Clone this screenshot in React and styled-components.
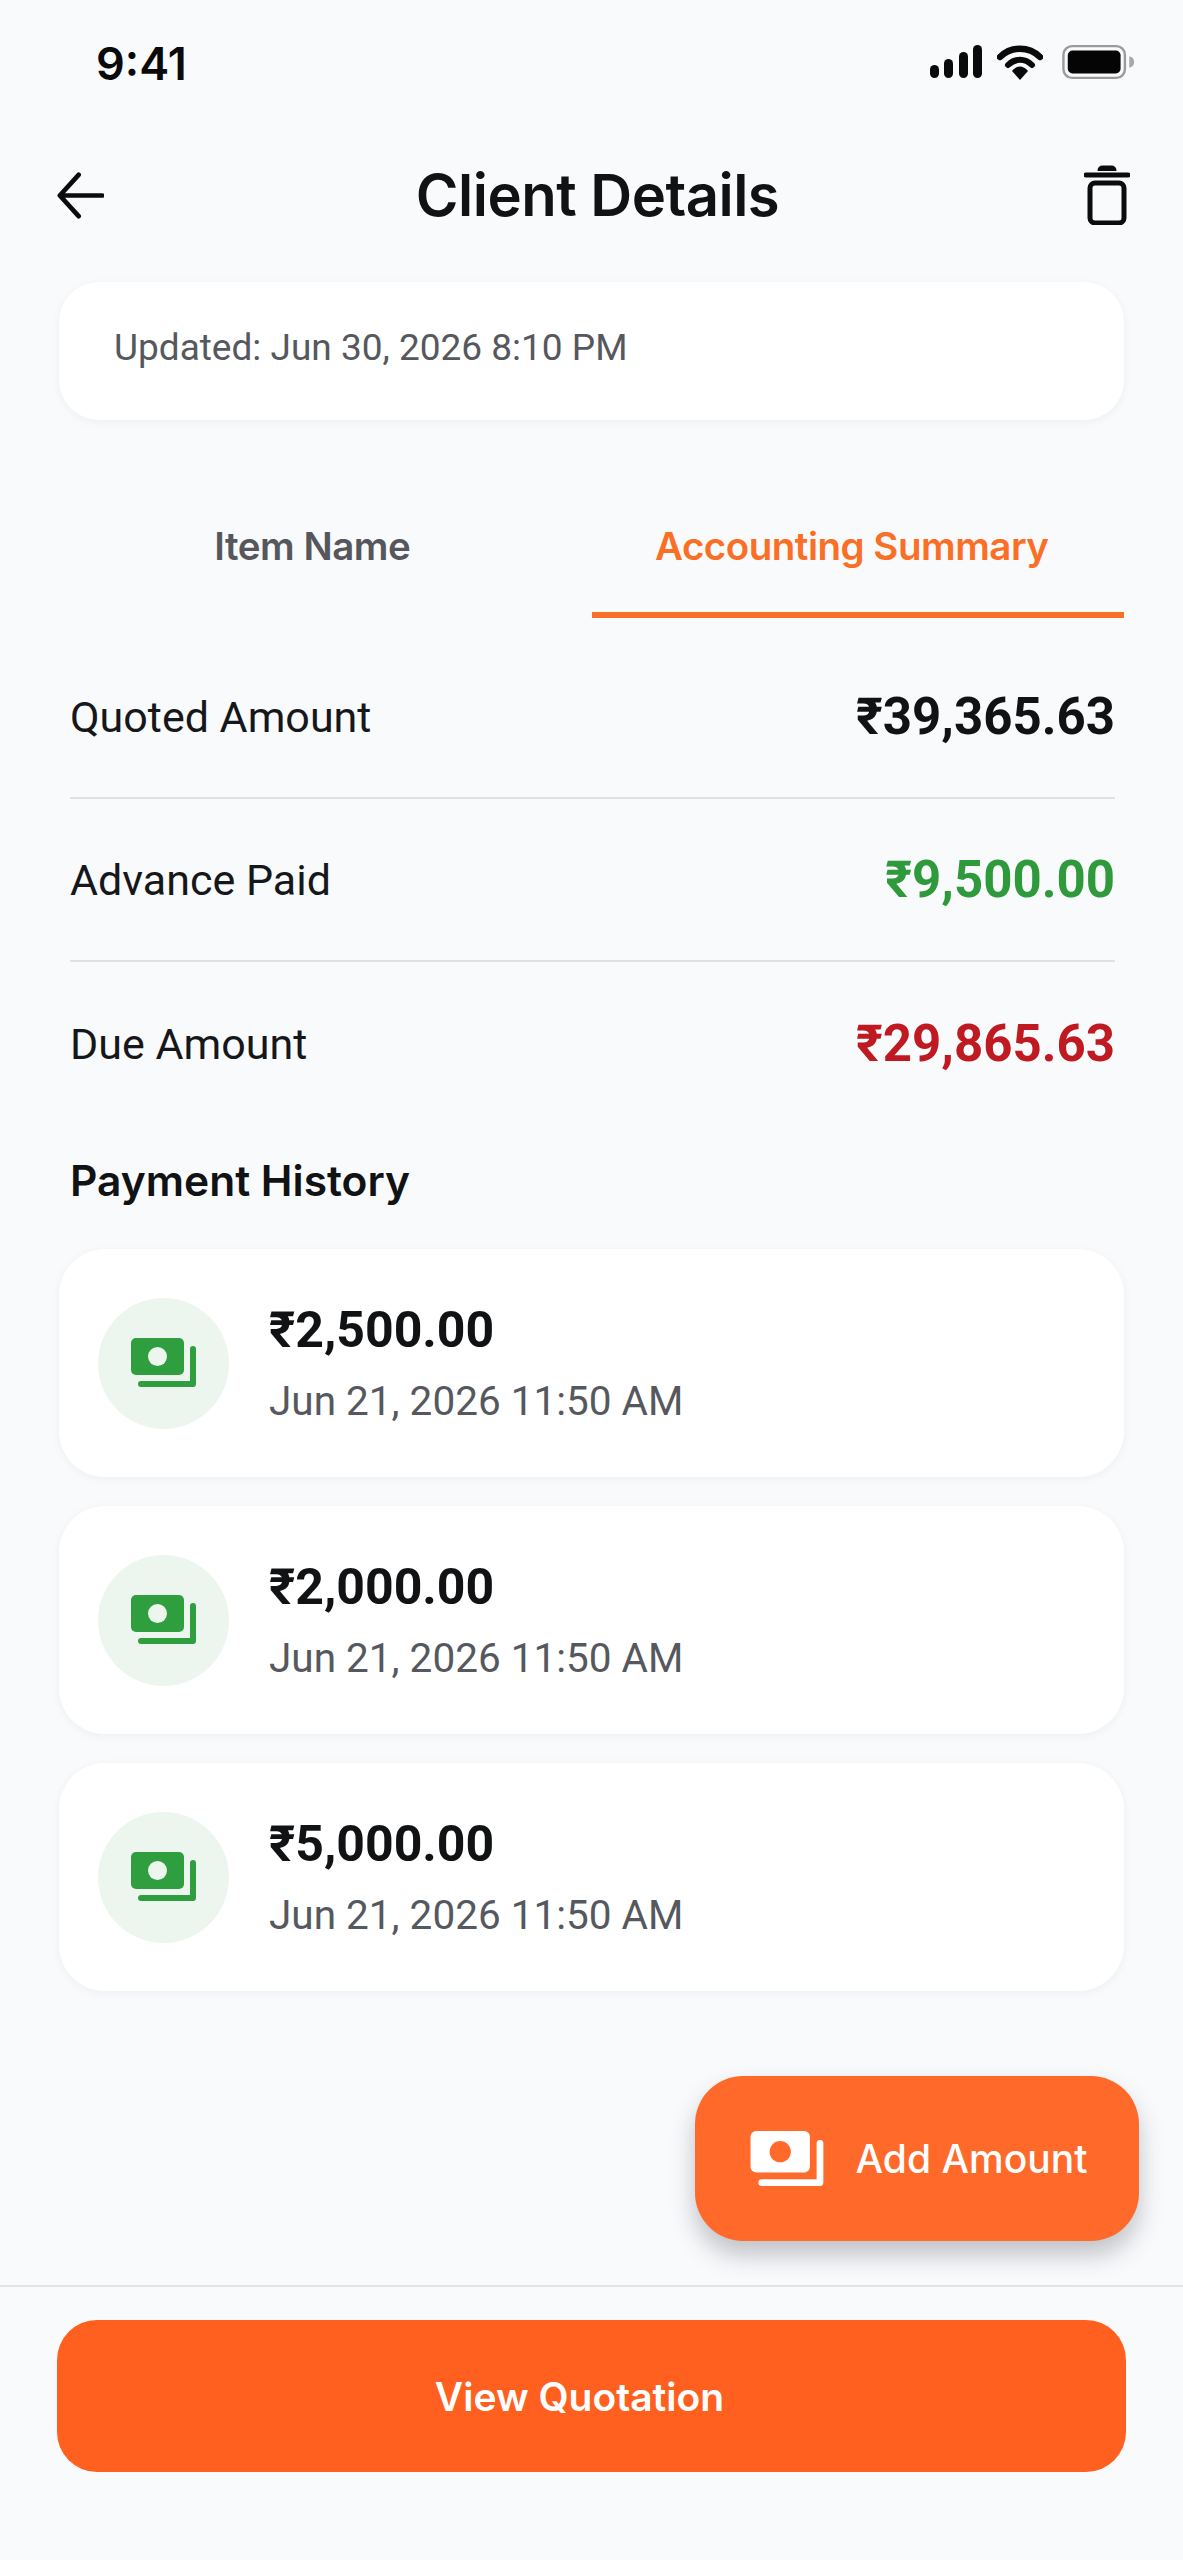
import React from 'react';
import styled, { createGlobalStyle } from 'styled-components';

const GlobalStyle = createGlobalStyle`
  html, body {
    margin: 0;
    padding: 0;
    background: #f9fafc;
  }
  * {
    box-sizing: border-box;
  }
`;

const payments = [
  { id: 1, amount: '₹2,500.00', date: 'Jun 21, 2026 11:50 AM' },
  { id: 2, amount: '₹2,000.00', date: 'Jun 21, 2026 11:50 AM' },
  { id: 3, amount: '₹5,000.00', date: 'Jun 21, 2026 11:50 AM' },
];

function CashIcon({ color, hole, width, height }) {
  return (
    <svg width={width} height={height} viewBox="0 0 66 50">
      <rect x="0" y="0" width="53" height="37" rx="5" fill={color} />
      <circle cx="26.5" cy="18.5" r="9.5" fill={hole} />
      <path d="M62 11 V46 H10" fill="none" stroke={color} strokeWidth="6" strokeLinecap="round" strokeLinejoin="round" />
    </svg>
  );
}

export default function App() {
  return (
    <Page>
      <GlobalStyle />
      <StatusBar>
        <Clock>9:41</Clock>
        <StatusIcons>
          <svg width="53" height="34" viewBox="0 0 53 34">
            <rect x="0" y="20" width="9" height="13" rx="4.5" fill="#0a0a0a" />
            <rect x="14" y="14" width="9" height="19" rx="4.5" fill="#0a0a0a" />
            <rect x="29" y="7" width="9" height="26" rx="4.5" fill="#0a0a0a" />
            <rect x="43" y="0" width="9" height="33" rx="4.5" fill="#0a0a0a" />
          </svg>
          <svg width="46" height="35" viewBox="0 0 46 35">
            <path d="M3 12 C14 1 32 1 43 12" fill="none" stroke="#0a0a0a" strokeWidth="6.5" strokeLinecap="round" />
            <path d="M11 20 C18 13 28 13 35 20" fill="none" stroke="#0a0a0a" strokeWidth="6" strokeLinecap="round" />
            <path d="M15 26 C20 20 26 20 31 26 L23 35 Z" fill="#0a0a0a" />
          </svg>
          <BatteryIcon width="73" height="36" viewBox="0 0 76 36">
            <rect x="1.5" y="1.5" width="64" height="33" rx="9" fill="none" stroke="#9a9a9a" strokeWidth="2.5" />
            <rect x="6" y="6" width="55" height="24" rx="5" fill="#050505" />
            <path d="M70 12 C74 13 75 15 75 18 C75 21 74 23 70 24 Z" fill="#a8a8a8" />
          </BatteryIcon>
        </StatusIcons>
      </StatusBar>

      <Header>
        <IconButton>
          <svg width="47" height="47" viewBox="0 0 50 50">
            <path d="M23 3 L3 25 L23 47 M4 25 H48" fill="none" stroke="#0c0c0c" strokeWidth="5" strokeLinecap="round" strokeLinejoin="round" />
          </svg>
        </IconButton>
        <Title>Client Details</Title>
        <IconButton>
          <svg width="46" height="60" viewBox="0 0 46 60">
            <path d="M2 10 H44" fill="none" stroke="#0c0c0c" strokeWidth="5" strokeLinecap="round" />
            <path d="M15 6 Q15 2 19 2 H27 Q31 2 31 6" fill="#0c0c0c" stroke="#0c0c0c" strokeWidth="3" />
            <rect x="6" y="18" width="34" height="40" rx="5" fill="none" stroke="#0c0c0c" strokeWidth="5" />
          </svg>
        </IconButton>
      </Header>

      <Content>
        <UpdatedCard>Updated: Jun 30, 2026 8:10 PM</UpdatedCard>

        <Tabs>
          <Tab>Item Name</Tab>
          <Tab $active>Accounting Summary</Tab>
        </Tabs>

        <Summary>
          <SummaryRow>
            <RowLabel>Quoted Amount</RowLabel>
            <RowValue $color="#111214">₹39,365.63</RowValue>
          </SummaryRow>
          <SummaryRow>
            <RowLabel>Advance Paid</RowLabel>
            <RowValue $color="#2e9a3c">₹9,500.00</RowValue>
          </SummaryRow>
          <SummaryRow>
            <RowLabel>Due Amount</RowLabel>
            <RowValue $color="#bf1a22">₹29,865.63</RowValue>
          </SummaryRow>
        </Summary>

        <SectionTitle>Payment History</SectionTitle>

        <PaymentList>
          {payments.map((p) => (
            <PaymentCard key={p.id}>
              <IconCircle>
                <CashIcon color="#2f9e3f" hole="#ecf6ee" width="66" height="50" />
              </IconCircle>
              <PaymentText>
                <PaymentAmount>{p.amount}</PaymentAmount>
                <PaymentDate>{p.date}</PaymentDate>
              </PaymentText>
            </PaymentCard>
          ))}
        </PaymentList>

        <AddButton>
          <CashIcon color="#ffffff" hole="#ff6a2b" width="75" height="56" />
          Add Amount
        </AddButton>
      </Content>

      <Footer>
        <QuotationButton>View Quotation</QuotationButton>
      </Footer>
    </Page>
  );
}

const Page = styled.div`
  width: 1183px;
  height: 2560px;
  display: flex;
  flex-direction: column;
  background: #f9fafc;
  font-family: 'Roboto', 'Inter', sans-serif;
  overflow: hidden;
`;

const StatusBar = styled.div`
  height: 128px;
  padding: 40px 48px 0 96px;
  display: flex;
  justify-content: space-between;
  align-items: flex-start;
`;

const Clock = styled.div`
  font-family: 'Inter', sans-serif;
  font-weight: 600;
  font-size: 45px;
  line-height: 48px;
  color: #0a0a0a;
`;

const StatusIcons = styled.div`
  display: flex;
  align-items: center;
  gap: 14px;
  margin-top: 4px;
`;

const BatteryIcon = styled.svg`
  margin-left: 5px;
`;

const Header = styled.header`
  height: 134px;
  padding: 0 51px 0 55px;
  display: flex;
  justify-content: space-between;
  align-items: center;
`;

const IconButton = styled.div`
  width: 50px;
  display: flex;
  justify-content: center;
`;

const Title = styled.h1`
  margin: 0 0 0 8px;
  font-family: 'Inter', sans-serif;
  font-weight: 600;
  font-size: 58px;
  letter-spacing: -0.5px;
  color: #111214;
`;

const Content = styled.main`
  flex: 1;
  padding: 20px 59px 0;
  display: flex;
  flex-direction: column;
`;

const UpdatedCard = styled.div`
  height: 138px;
  padding: 0 55px 8px;
  display: flex;
  align-items: center;
  background: #fff;
  border-radius: 40px;
  box-shadow: 0 2px 10px rgba(30, 40, 70, 0.05);
  font-size: 37px;
  color: #55585e;
`;

const Tabs = styled.div`
  margin-top: 94px;
  display: flex;
`;

const Tab = styled.div`
  width: 50%;
  height: 104px;
  padding: 0 ${(props) => (props.$active ? '12px' : '26px')} 35px 0;
  display: flex;
  justify-content: center;
  align-items: center;
  font-family: 'Inter', sans-serif;
  font-weight: 600;
  font-size: 38.5px;
  letter-spacing: -0.5px;
  color: ${(props) => (props.$active ? '#fa6f26' : '#55575c')};
  border-bottom: 6px solid ${(props) => (props.$active ? '#fa6f26' : 'transparent')};
`;

const Summary = styled.section`
  padding: 18px 9px 0 11px;
`;

const SummaryRow = styled.div`
  height: 163px;
  display: flex;
  justify-content: space-between;
  align-items: center;
  border-bottom: 2px solid #e0e1e5;
  &:last-child {
    border-bottom: none;
  }
`;

const RowLabel = styled.span`
  font-size: 43px;
  color: #16171a;
`;

const RowValue = styled.span`
  font-family: 'Roboto', sans-serif;
  font-weight: 700;
  font-size: 51px;
  color: ${(props) => props.$color};
`;

const SectionTitle = styled.h2`
  margin: 30px 11px 0;
  font-family: 'Inter', sans-serif;
  font-weight: 600;
  font-size: 42.5px;
  line-height: 52px;
  color: #111214;
`;

const PaymentList = styled.div`
  margin-top: 42px;
  display: flex;
  flex-direction: column;
  gap: 29px;
`;

const PaymentCard = styled.article`
  height: 228px;
  padding: 0 39px;
  display: flex;
  align-items: center;
  gap: 40px;
  background: #fff;
  border-radius: 46px;
  box-shadow: 0 2px 10px rgba(30, 40, 70, 0.05);
`;

const IconCircle = styled.div`
  width: 131px;
  height: 131px;
  border-radius: 50%;
  background: #ecf6ee;
  display: flex;
  justify-content: center;
  align-items: center;
`;

const PaymentText = styled.div`
  display: flex;
  flex-direction: column;
  gap: 20px;
`;

const PaymentAmount = styled.div`
  font-family: 'Roboto', sans-serif;
  font-weight: 700;
  font-size: 50px;
  line-height: 56px;
  color: #111214;
`;

const PaymentDate = styled.div`
  font-size: 40.5px;
  line-height: 46px;
  color: #55585e;
`;

const AddButton = styled.button`
  align-self: flex-end;
  margin: 85px -15px 0 0;
  width: 444px;
  height: 165px;
  padding: 0 0 0 4px;
  border: none;
  border-radius: 48px;
  background: #ff6a2b;
  box-shadow: 0 14px 24px rgba(50, 50, 60, 0.28);
  display: flex;
  justify-content: center;
  align-items: center;
  gap: 30px;
  font-family: 'Inter', sans-serif;
  font-weight: 500;
  font-size: 39px;
  color: #fff;
`;

const Footer = styled.footer`
  height: 275px;
  padding: 33px 57px 0;
  border-top: 2px solid #e2e3e7;
`;

const QuotationButton = styled.button`
  width: 100%;
  height: 152px;
  padding: 0 24px 0 0;
  border: none;
  border-radius: 40px;
  background: #ff5f1f;
  font-family: 'Inter', sans-serif;
  font-weight: 600;
  font-size: 39px;
  color: #fff;
`;
